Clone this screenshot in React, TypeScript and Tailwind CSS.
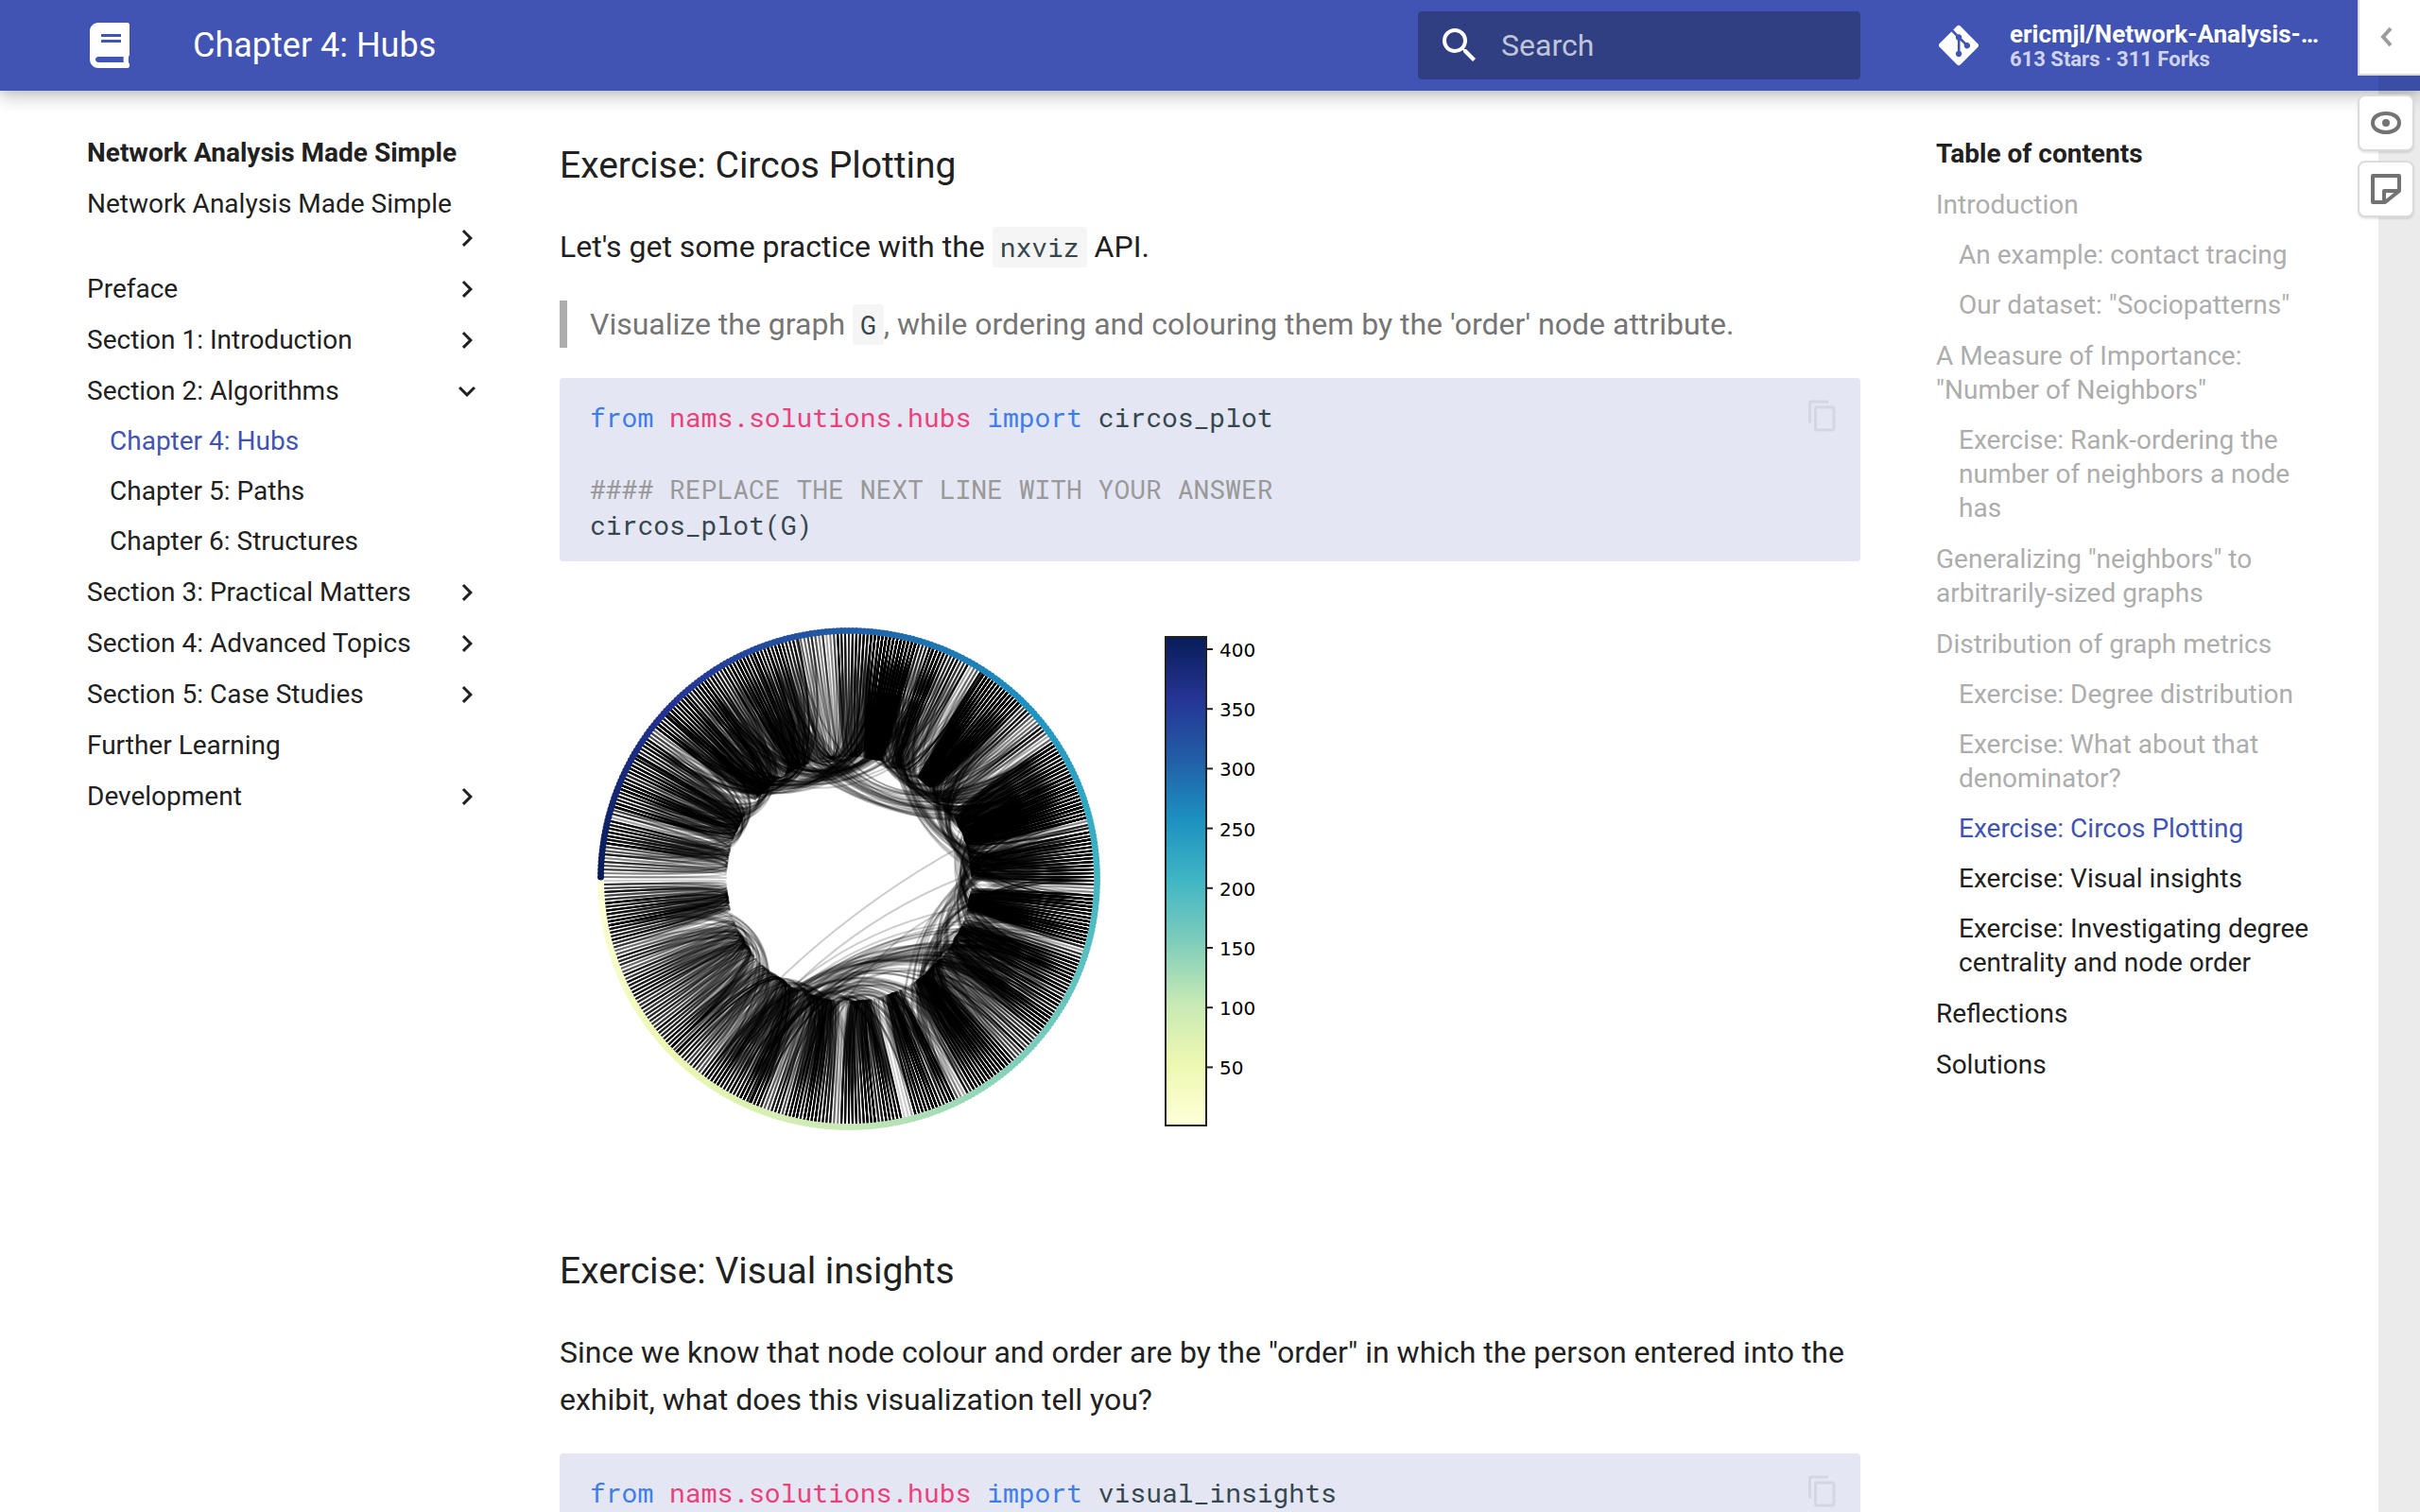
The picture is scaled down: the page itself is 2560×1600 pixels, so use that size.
import React from "react";
import { FaBook, FaGitAlt } from "react-icons/fa";

const CHEVRON = "M8.59 16.58L13.17 12 8.59 7.41 10 6l6 6-6 6-1.41-1.42z";

type NavItem = { label: string; arrow?: boolean; open?: boolean; children?: { label: string; tone: Tone }[] };
type Tone = "active" | "passed" | "normal";

const TONES: Record<Tone, string> = {
  active: "text-[#4154b3]",
  passed: "text-[#adadad]",
  normal: "text-[#212121]",
};

const SITE_NAV: NavItem[] = [
  { label: "Network Analysis Made Simple", arrow: true },
  { label: "Preface", arrow: true },
  { label: "Section 1: Introduction", arrow: true },
  {
    label: "Section 2: Algorithms",
    arrow: true,
    open: true,
    children: [
      { label: "Chapter 4: Hubs", tone: "active" },
      { label: "Chapter 5: Paths", tone: "normal" },
      { label: "Chapter 6: Structures", tone: "normal" },
    ],
  },
  { label: "Section 3: Practical Matters", arrow: true },
  { label: "Section 4: Advanced Topics", arrow: true },
  { label: "Section 5: Case Studies", arrow: true },
  { label: "Further Learning" },
  { label: "Development", arrow: true },
];

const TOC: { label: string; tone: Tone; children?: { label: string; tone: Tone }[] }[] = [
  {
    label: "Introduction",
    tone: "passed",
    children: [
      { label: "An example: contact tracing", tone: "passed" },
      { label: 'Our dataset: "Sociopatterns"', tone: "passed" },
    ],
  },
  {
    label: 'A Measure of Importance: "Number of Neighbors"',
    tone: "passed",
    children: [{ label: "Exercise: Rank-ordering the number of neighbors a node has", tone: "passed" }],
  },
  { label: 'Generalizing "neighbors" to arbitrarily-sized graphs', tone: "passed" },
  {
    label: "Distribution of graph metrics",
    tone: "passed",
    children: [
      { label: "Exercise: Degree distribution", tone: "passed" },
      { label: "Exercise: What about that denominator?", tone: "passed" },
      { label: "Exercise: Circos Plotting", tone: "active" },
      { label: "Exercise: Visual insights", tone: "normal" },
      { label: "Exercise: Investigating degree centrality and node order", tone: "normal" },
    ],
  },
  { label: "Reflections", tone: "normal" },
  { label: "Solutions", tone: "normal" },
];

function SubList({ items }: { items: { label: string; tone: Tone }[] }) {
  return (
    <ul className="mt-[17px] flex flex-col gap-[17px] pl-6">
      {items.map((c) => (
        <li key={c.label}>
          <a href="#" className={"block " + TONES[c.tone]}>
            {c.label}
          </a>
        </li>
      ))}
    </ul>
  );
}

function Header() {
  return (
    <header className="relative z-10 bg-[#4154b3] text-white shadow-[0_0_8px_rgba(0,0,0,0.1),0_8px_16px_rgba(0,0,0,0.2)]">
      <div className="mx-auto flex h-24 max-w-[2440px] items-center pl-8">
        <a href="#" aria-label="Network Analysis Made Simple" className="flex w-12 justify-center">
          <FaBook className="h-12 w-[42px]" />
        </a>
        <span className="ml-16 flex-1 text-4xl leading-[96px]">Chapter 4: Hubs</span>
        <label className="flex h-[72px] w-[468px] items-center rounded bg-[#303f82] pl-5">
          <svg viewBox="0 0 24 24" className="h-12 w-12 fill-white">
            <path d="M9.5 3A6.5 6.5 0 0 1 16 9.5c0 1.61-.59 3.09-1.56 4.23l.27.27h.79l5 5-1.5 1.5-5-5v-.79l-.27-.27A6.516 6.516 0 0 1 9.5 16 6.5 6.5 0 0 1 3 9.5 6.5 6.5 0 0 1 9.5 3m0 2C7 5 5 7 5 9.5S7 14 9.5 14 14 12 14 9.5 12 5 9.5 5z" />
          </svg>
          <input
            type="text"
            aria-label="Search"
            placeholder="Search"
            className="ml-5 w-80 bg-transparent text-[32px] leading-[40px] outline-none placeholder:text-[#c1c5d9] placeholder:opacity-100"
          />
        </label>
        <a href="#" className="ml-20 mr-10 flex w-[412px] items-center">
          <FaGitAlt className="mx-[3px] h-12 w-[42px] shrink-0" />
          <span className="ml-[30px] font-bold whitespace-nowrap">
            <span className="block text-[26px] leading-[30px]">ericmjl/Network-Analysis-…</span>
            <span className="block text-[22px] leading-[24px] text-[#cfd4ec]">613 Stars · 311 Forks</span>
          </span>
        </a>
      </div>
    </header>
  );
}

function SiteNav() {
  return (
    <nav aria-label="Navigation" className="pl-8 pr-8 pt-12 text-[28px] leading-[36px] text-[#212121]">
      <a href="#" className="block font-bold">
        Network Analysis Made Simple
      </a>
      <ul className="mt-[18px] flex flex-col gap-[18px]">
        {SITE_NAV.map((item) => (
          <li key={item.label}>
            <a href="#" className="flex flex-wrap">
              <span>{item.label}</span>
              {item.arrow && (
                <svg viewBox="0 0 24 24" className={item.open ? "ml-auto h-9 w-9 rotate-90 fill-current" : "ml-auto h-9 w-9 fill-current"}>
                  <path d={CHEVRON} />
                </svg>
              )}
            </a>
            {item.children && <SubList items={item.children} />}
          </li>
        ))}
      </ul>
    </nav>
  );
}

function TocNav() {
  return (
    <nav aria-label="Table of contents" className="pl-8 pr-8 pt-[49px] text-[28px] leading-[36px] text-[#212121]">
      <p className="font-bold">Table of contents</p>
      <ul className="mt-[18px] flex flex-col gap-[18px]">
        {TOC.map((item) => (
          <li key={item.label}>
            <a href="#" className={"block " + TONES[item.tone]}>
              {item.label}
            </a>
            {item.children && <SubList items={item.children} />}
          </li>
        ))}
      </ul>
    </nav>
  );
}

function InlineCode({ children }: { children: React.ReactNode }) {
  return (
    <code className="rounded bg-[#f5f5f5] px-2 py-[3px] font-['Roboto_Mono','DejaVu_Sans_Mono',monospace] text-[28px] leading-none text-[#36464e]">
      {children}
    </code>
  );
}

function CodeBlock({ children }: { children: React.ReactNode }) {
  return (
    <div className="relative mt-8 rounded bg-[#e4e6f3] px-8 pt-[23px] pb-[19px]">
      <pre className="font-['Roboto_Mono','DejaVu_Sans_Mono',monospace] text-[28px] leading-[38px] text-[#36464e]">
        <code className="font-['Roboto_Mono','DejaVu_Sans_Mono',monospace]">{children}</code>
      </pre>
      <button type="button" aria-label="Copy to clipboard" className="absolute right-[22px] top-[22px] text-[#d4d6e2]">
        <svg viewBox="0 0 24 24" className="h-9 w-9 fill-current">
          <path d="M19 21H8V7h11m0-2H8a2 2 0 0 0-2 2v14a2 2 0 0 0 2 2h11a2 2 0 0 0 2-2V7a2 2 0 0 0-2-2m-3-4H4a2 2 0 0 0-2 2v14h2V3h12V1z" />
        </svg>
      </button>
    </div>
  );
}

/* ---- Circos plot ---- */

const NODE_COUNT = 410;
const CX = 306;
const CY = 304;
const RAMP = [
  [255, 255, 217],
  [237, 248, 177],
  [199, 233, 180],
  [127, 205, 187],
  [65, 182, 196],
  [29, 145, 192],
  [34, 94, 168],
  [37, 52, 148],
  [8, 29, 88],
];

function rampColor(t: number) {
  const p = Math.min(t * 8, 7.999);
  const i = Math.floor(p);
  const f = p - i;
  const c = RAMP[i].map((v, k) => Math.round(v + (RAMP[i + 1][k] - v) * f));
  return `rgb(${c[0]},${c[1]},${c[2]})`;
}

function pointAt(deg: number, r: number): [number, number] {
  const a = Math.PI - (deg * Math.PI) / 180;
  return [CX + r * Math.cos(a), CY + r * Math.sin(a)];
}

function makeRandom(seed: number) {
  let s = seed;
  return () => {
    s = (s + 0x6d2b79f5) | 0;
    let t = Math.imul(s ^ (s >>> 15), 1 | s);
    t = (t + Math.imul(t ^ (t >>> 7), 61 | t)) ^ t;
    return ((t ^ (t >>> 14)) >>> 0) / 4294967296;
  };
}

/* [start degree, end degree, edges] for each group of visitors */
const GROUPS: [number, number, number][] = [
  [1, 16, 70], [5, 15, 30], [17, 44, 80], [24, 44, 40], [40, 68, 100], [55, 68, 30], [64, 86, 80], [76, 86, 50],
  [87, 103, 120], [88, 96, 30], [105, 116, 100], [104, 112, 30], [118, 132, 90], [120, 146, 150], [140, 161, 150],
  [150, 162, 50], [163, 176, 180], [165, 174, 60], [178, 191, 110], [180, 200, 60], [193, 204, 110], [196, 214, 150],
  [200, 213, 50], [216, 224, 16], [216, 238, 26], [225, 237, 170], [226, 236, 80], [239, 252, 70], [253, 264, 240],
  [254, 262, 90], [262, 275, 44], [266, 287, 50], [284, 300, 90], [288, 306, 60], [300, 322, 140], [306, 318, 40],
  [323, 343, 130], [328, 338, 30], [344, 358, 50], [340, 354, 20],
];

/* [from degree, to degree, spread, edges] for ties between distant groups */
const BRIDGES: [number, number, number, number][] = [
  [8, 58, 4, 7], [14, 50, 6, 12], [52, 200, 1, 1], [56, 188, 1, 1], [54, 174, 1, 1], [78, 180, 1, 1], [58, 165, 3, 6],
  [60, 152, 8, 36], [64, 132, 10, 24], [70, 110, 10, 40], [50, 84, 8, 28], [118, 178, 5, 16], [120, 160, 8, 26],
  [110, 190, 4, 7], [128, 192, 5, 12], [150, 196, 8, 26], [160, 208, 8, 26], [178, 232, 7, 30], [178, 254, 5, 18],
  [205, 254, 6, 30], [208, 288, 6, 18], [208, 240, 8, 24], [232, 262, 7, 22], [203, 298, 5, 14], [252, 304, 7, 46],
  [256, 322, 6, 30], [242, 312, 6, 16], [262, 290, 6, 24], [284, 324, 6, 30], [300, 338, 6, 24], [318, 350, 6, 18],
  [216, 262, 5, 14], [196, 226, 6, 22],
];

/* degrees at which few ties are recorded */
const QUIET = [45, 69, 86, 104, 117, 162, 177, 192, 215, 220, 239, 252, 275, 281, 323, 344];

const EDGES: string[] = (() => {
  const rnd = makeRandom(20);
  const step = 360 / NODE_COUNT;
  const weight = Array.from({ length: NODE_COUNT }, (_, i) => {
    const d = i * step;
    const quiet = QUIET.some((q) => Math.abs(q - d) < 1.3);
    return quiet ? 0.12 : 0.3 + 0.7 * rnd() * rnd();
  });
  const index = (d: number) => Math.max(0, Math.min(NODE_COUNT - 1, Math.round(d / step)));
  const snap = (d: number) => (index(d) + 0.5) * step;
  const out: string[] = [];
  const add = (a: number, b: number) => {
    const [x1, y1] = pointAt(snap(a), 260);
    const [x2, y2] = pointAt(snap(b), 260);
    out.push(`M${x1.toFixed(1)} ${y1.toFixed(1)}Q${CX} ${CY} ${x2.toFixed(1)} ${y2.toFixed(1)}`);
  };
  const pick = (a: number, b: number) => {
    let d = a + rnd() * (b - a);
    for (let k = 0; k < 4 && rnd() > weight[index(d)]; k++) d = a + rnd() * (b - a);
    return d;
  };
  for (let i = 0; i < NODE_COUNT; i++) {
    const d = i * step;
    add(d, Math.max(0.5, Math.min(359, d + (rnd() - 0.5) * 16)));
  }
  for (const [a, b, n] of GROUPS) {
    for (let i = 0; i < n * 0.85; i++) add(pick(a, b), pick(a, b));
  }
  for (const [a, b, w, n] of BRIDGES) {
    for (let i = 0; i < n; i++) add(pick(a - w, a + w), pick(b - w, b + w));
  }
  return out;
})();

const STRONG: [number, number][] = [[46, 68], [45, 66], [237, 250], [282, 318], [293, 312], [192, 205], [343, 330]];

function CircosPlot() {
  const ticks = [400, 350, 300, 250, 200, 150, 100, 50];
  return (
    <svg viewBox="0 0 800 624" className="mt-8 block h-[624px] w-[800px]" role="img" aria-label="Circos plot of the graph">
      <g fill="none" stroke="#000" strokeWidth="2" strokeOpacity="0.2">
        {EDGES.map((d, i) => (
          <path key={i} d={d} />
        ))}
      </g>
      <g fill="none" stroke="#000" strokeWidth="2" strokeOpacity="0.85">
        {STRONG.map(([a, b]) => {
          const [x1, y1] = pointAt(a, 260);
          const [x2, y2] = pointAt(b, 260);
          return <path key={a} d={`M${x1} ${y1}Q${CX} ${CY} ${x2} ${y2}`} />;
        })}
      </g>
      {Array.from({ length: NODE_COUNT }, (_, i) => {
        const [x, y] = pointAt(((i + 0.5) * 360) / NODE_COUNT, 262.5);
        return <circle key={i} cx={x} cy={y} r="3.5" fill={rampColor(i / (NODE_COUNT - 1))} />;
      })}
      <defs>
        <linearGradient id="ramp" x1="0" y1="1" x2="0" y2="0">
          {RAMP.map((c, i) => (
            <stop key={i} offset={i / 8} stopColor={`rgb(${c[0]},${c[1]},${c[2]})`} />
          ))}
        </linearGradient>
      </defs>
      <rect x="641" y="48" width="43" height="517" fill="url(#ramp)" stroke="#222" strokeWidth="2" />
      {ticks.map((v) => {
        const y = 61 + (400 - v) * 1.264;
        return (
          <g key={v}>
            <path d={`M685 ${y}h6`} stroke="#222" strokeWidth="2" />
            <text x="698" y={y + 8} fontSize="20" fontFamily="DejaVu Sans, sans-serif">
              {v}
            </text>
          </g>
        );
      })}
    </svg>
  );
}

function AnnotationBar() {
  return (
    <aside className="absolute inset-y-0 right-0 z-20 w-[66px]">
      <div className="absolute inset-y-0 right-0 w-11 bg-black/8" />
      <div className="relative flex flex-col">
        <button
          type="button"
          aria-label="Open sidebar"
          className="flex h-20 items-center justify-center border-b-2 border-l-2 border-[#dbdbdb] bg-white pr-2"
        >
          <svg viewBox="0 0 16 24" className="h-6 w-4 fill-none stroke-[#9c9c9c] stroke-4">
            <path d="M13 3L5 12l8 9" />
          </svg>
        </button>
        <button
          type="button"
          aria-label="Hide highlights"
          className="mt-5 flex h-[60px] w-[60px] items-center justify-center rounded-lg border-2 border-[#dbdbdb] bg-white shadow-[0_2px_2px_rgba(0,0,0,0.1)]"
        >
          <svg viewBox="0 0 32 32" className="h-8 w-8 fill-none stroke-[#737373] stroke-4">
            <path d="M16 6C8 6 2 10 2 16s6 10 14 10 14-4 14-10S24 6 16 6z" />
            <circle cx="16" cy="16" r="4" className="fill-[#737373] stroke-none" />
          </svg>
        </button>
        <button
          type="button"
          aria-label="New page note"
          className="mt-[10px] flex h-[60px] w-[60px] items-center justify-center rounded-lg border-2 border-[#dbdbdb] bg-white shadow-[0_2px_2px_rgba(0,0,0,0.1)]"
        >
          <svg viewBox="0 0 32 32" className="h-8 w-8 fill-none stroke-[#737373] stroke-4" strokeLinejoin="round">
            <path d="M2 2h28v16L15 30H2zM14 30V18h16" />
          </svg>
        </button>
      </div>
    </aside>
  );
}

export default function App() {
  return (
    <div className="relative h-screen overflow-hidden bg-white font-['Roboto',sans-serif]">
      <Header />
      <div className="mx-auto grid max-w-[2440px] grid-cols-[484px_1fr_484px]">
        <SiteNav />
        <main className="min-w-0 px-12 pt-12 text-[32px] leading-[50px] text-[#212121]">
          <h3 className="text-[39px] leading-[62px]">Exercise: Circos Plotting</h3>
          <p className="mt-[30px]">
            Let's get some practice with the <InlineCode>nxviz</InlineCode> API.
          </p>
          <blockquote className="mt-8 border-l-8 border-[#adadad] pl-6 text-[#757575]">
            Visualize the graph <InlineCode>G</InlineCode>, while ordering and colouring them by the 'order' node attribute.
          </blockquote>
          <CodeBlock>
            <span className="text-[#3f7ee8]">from</span> <span className="text-[#ec407a]">nams.solutions.hubs</span>{" "}
            <span className="text-[#3f7ee8]">import</span> circos_plot{"\n\n"}
            <span className="text-[#999999]">#### REPLACE THE NEXT LINE WITH YOUR ANSWER</span>
            {"\n"}circos_plot(G)
          </CodeBlock>
          <CircosPlot />
          <h3 className="mt-16 text-[39px] leading-[62px]">Exercise: Visual insights</h3>
          <p className="mt-[30px]">
            Since we know that node colour and order are by the "order" in which the person entered into the exhibit, what does
            this visualization tell you?
          </p>
          <CodeBlock>
            <span className="text-[#3f7ee8]">from</span> <span className="text-[#ec407a]">nams.solutions.hubs</span>{" "}
            <span className="text-[#3f7ee8]">import</span> visual_insights
          </CodeBlock>
        </main>
        <TocNav />
      </div>
      <AnnotationBar />
    </div>
  );
}
